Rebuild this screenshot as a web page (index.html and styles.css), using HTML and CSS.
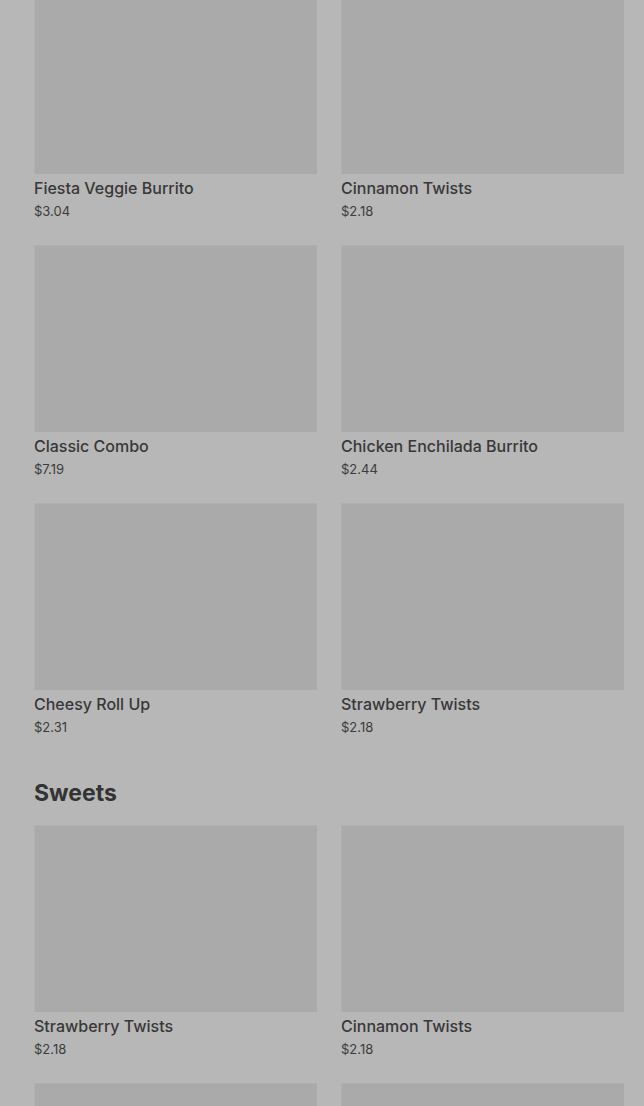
FILE: index.html
```html
<!DOCTYPE html>
<html lang="en">
<head>
  <meta charset="UTF-8">
  <meta name="viewport" content="width=device-width, initial-scale=1">
  <title>Menu</title>
  <link rel="stylesheet" href="styles.css">
</head>
<body>

  <div class="menu">
    <section class="category">
      <div class="items">
        <div class="item">
          <div class="thumb"></div>
          <div class="name">Fiesta Veggie Burrito</div>
          <div class="price">$3.04</div>
        </div>
        <div class="item">
          <div class="thumb"></div>
          <div class="name">Cinnamon Twists</div>
          <div class="price">$2.18</div>
        </div>
        <div class="item">
          <div class="thumb"></div>
          <div class="name">Classic Combo</div>
          <div class="price">$7.19</div>
        </div>
        <div class="item">
          <div class="thumb"></div>
          <div class="name">Chicken Enchilada Burrito</div>
          <div class="price">$2.44</div>
        </div>
        <div class="item">
          <div class="thumb"></div>
          <div class="name">Cheesy Roll Up</div>
          <div class="price">$2.31</div>
        </div>
        <div class="item">
          <div class="thumb"></div>
          <div class="name">Strawberry Twists</div>
          <div class="price">$2.18</div>
        </div>
      </div>
    </section>

    <section class="category">
      <h2>Sweets</h2>
      <div class="items">
        <div class="item">
          <div class="thumb"></div>
          <div class="name">Strawberry Twists</div>
          <div class="price">$2.18</div>
        </div>
        <div class="item">
          <div class="thumb"></div>
          <div class="name">Cinnamon Twists</div>
          <div class="price">$2.18</div>
        </div>
        <div class="item">
          <div class="thumb"></div>
          <div class="name">Mexican Pizza</div>
          <div class="price">$4.49</div>
        </div>
        <div class="item">
          <div class="thumb"></div>
          <div class="name">Nachos BellGrande</div>
          <div class="price">$4.79</div>
        </div>
      </div>
    </section>
  </div>

</body>
</html>
```

FILE: styles.css
```css
* {
  box-sizing: border-box;
}
body {
  margin: 0;
  background: #b7b7b7;
  color: #363636;
  font-family: Inter, 'Noto Sans', sans-serif;
  overflow: hidden;
}
.menu {
  margin-top: -13px;
  padding: 0 20px 0 34px;
}
.items {
  display: grid;
  grid-template-columns: 1fr 1fr;
  column-gap: 24px;
  row-gap: 24px;
}
.thumb {
  height: 187px;
  background: #aaaaaa;
  border-top: 1px solid #b0b0b0;
  border-left: 1px solid #b0b0b0;
}
.name {
  margin-top: 4px;
  font-size: 16px;
  line-height: 20px;
  font-weight: 500;
  color: #383838;
}
.price {
  margin-top: 3px;
  font-size: 13px;
  line-height: 20px;
  color: #3c3c3c;
}
.category h2 {
  margin: 40px 0 16px;
  font-size: 23px;
  line-height: 32px;
  font-weight: 700;
  color: #333;
}
```
